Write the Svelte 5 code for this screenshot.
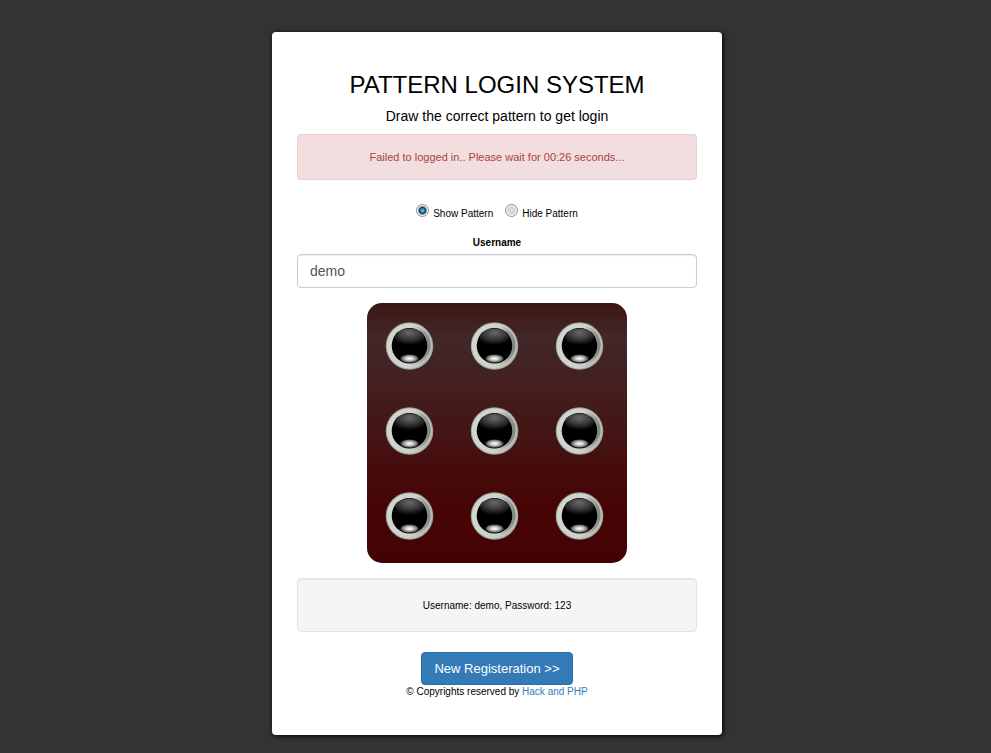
<script>
	let username = 'demo';
	let mode = 'show';
	let wait = '00:26';

	const modes = [
		{ id: 'show', label: 'Show Pattern' },
		{ id: 'hide', label: 'Hide Pattern' }
	];
	const dots = [1, 2, 3, 4, 5, 6, 7, 8, 9];
</script>

<svelte:head>
	<title>Pattern Login System</title>
</svelte:head>

<!-- shared gradients for the pattern dots -->
<svg class="defs" width="0" height="0" aria-hidden="true">
	<defs>
		<linearGradient id="ring" x1="0" y1="0" x2="1" y2="0.3">
			<stop offset="0" stop-color="#d3d6ce" />
			<stop offset="0.7" stop-color="#cfd2ca" />
			<stop offset="1" stop-color="#b9bcb5" />
		</linearGradient>
		<linearGradient id="shade" x1="0" y1="0" x2="1" y2="0">
			<stop offset="0.6" stop-color="#7f827d" stop-opacity="0" />
			<stop offset="1" stop-color="#7f827d" />
		</linearGradient>
		<radialGradient id="gloss" cx="0.5" cy="0.25" r="0.72">
			<stop offset="0" stop-color="#686868" />
			<stop offset="0.5" stop-color="#3c3c3c" />
			<stop offset="1" stop-color="#000" />
		</radialGradient>
		<radialGradient id="glow">
			<stop offset="0" stop-color="#fff" />
			<stop offset="0.35" stop-color="#d0d0d0" />
			<stop offset="0.75" stop-color="#666" />
			<stop offset="1" stop-color="#000" stop-opacity="0" />
		</radialGradient>
	</defs>
</svg>

<main class="card">
	<h1>PATTERN LOGIN SYSTEM</h1>
	<h2>Draw the correct pattern to get login</h2>

	<div class="alert" role="alert">Failed to logged in.. Please wait for {wait} seconds...</div>

	<form on:submit|preventDefault>
		<div class="modes">
			{#each modes as item}
				<label>
					<input type="radio" name="mode" value={item.id} bind:group={mode} />
					<span>{item.label}</span>
				</label>
			{/each}
		</div>

		<label class="name" for="username">Username</label>
		<input id="username" class="field" type="text" bind:value={username} />

		<div class="board">
			{#each dots as dot}
				<svg class="dot" viewBox="0 0 50 50" role="img" aria-label="Dot {dot}">
					<circle cx="24.5" cy="25" r="24.4" fill="#222" opacity="0.35" />
					<circle cx="24.5" cy="25" r="23.8" fill="#9a9e97" />
					<circle cx="24.5" cy="25" r="22.8" fill="url(#ring)" />
					<circle cx="25.5" cy="24" r="20" fill="url(#shade)" />
					<circle cx="24.5" cy="24.7" r="17.8" fill="#000" />
					<ellipse cx="24.5" cy="16" rx="14.6" ry="8.6" fill="url(#gloss)" />
					<ellipse cx="24.5" cy="37.6" rx="10.4" ry="4.8" fill="url(#glow)" />
				</svg>
			{/each}
		</div>
	</form>

	<div class="well">Username: demo, Password: 123</div>

	<button class="btn" type="button">New Registeration &gt;&gt;</button>
	<footer>© Copyrights reserved by <a href="#home">Hack and PHP</a></footer>
</main>

<style>
	:global(body) {
		padding-left: 3px;
		background: #333;
		color: #000;
		font: 10px/14px "Liberation Sans", Arial, sans-serif;
	}

	.defs {
		position: absolute;
	}

	.card {
		box-sizing: border-box;
		max-width: 450px;
		margin: 32px auto 18px;
		padding: 40px 25px 36px;
		border-radius: 4px;
		background: #fff;
		box-shadow: 1px 1px 5px #000;
		text-align: center;
	}

	h1 {
		margin: 0 0 10px;
		font-size: 24px;
		line-height: 26px;
		font-weight: 400;
	}

	h2 {
		margin: 0 0 10px;
		font-size: 14px;
		line-height: 16px;
		font-weight: 400;
	}

	.alert {
		margin-bottom: 24px;
		padding: 15px;
		border: 1px solid #ebccd1;
		border-radius: 4px;
		background: #f2dede;
		color: #a94442;
		font-size: 11px;
	}

	.modes {
		display: flex;
		justify-content: center;
		gap: 12px;
		margin-bottom: 15px;
	}

	.modes label {
		display: flex;
		gap: 4px;
	}

	.modes span {
		padding-top: 3px;
	}

	.modes input {
		appearance: none;
		box-sizing: border-box;
		width: 13px;
		height: 13px;
		margin: 0;
		border: 1px solid #8e8f8f;
		border-radius: 50%;
		background: radial-gradient(circle, #e6e6e6 0, #d0d0d0 3px, #f4f4f4 5px);
	}

	.modes input:checked {
		background: radial-gradient(circle, #7fd0f0 0, #2384b4 2px, #12375a 3px, #f4f4f4 5px);
	}

	.name {
		display: block;
		margin-bottom: 4px;
		font-weight: 700;
	}

	.field {
		box-sizing: border-box;
		display: block;
		width: 100%;
		height: 34px;
		padding: 6px 12px;
		border: 1px solid #ccc;
		border-radius: 4px;
		box-shadow: inset 0 1px 1px rgba(0, 0, 0, 0.08);
		color: #555;
		font: 14px/20px "Liberation Sans", Arial, sans-serif;
	}

	.board {
		box-sizing: border-box;
		display: grid;
		grid-template-columns: repeat(3, 50px);
		grid-template-rows: repeat(3, 50px);
		gap: 35px;
		width: 260px;
		height: 260px;
		margin: 15px auto;
		padding: 18px;
		border-radius: 15px;
		background: linear-gradient(#3b1512 0, #432729 13%, #431f1e 32%, #470405 78%, #430304 100%);
	}

	.dot {
		display: block;
		width: 50px;
		height: 50px;
	}

	.well {
		margin-bottom: 20px;
		padding: 20px 19px 18px;
		border: 1px solid #e3e3e3;
		border-radius: 4px;
		background: #f5f5f5;
		box-shadow: inset 0 1px 1px rgba(0, 0, 0, 0.05);
	}

	.btn {
		display: block;
		margin: 0 auto;
		padding: 6px 12px;
		border: 1px solid #2e6da4;
		border-radius: 4px;
		background: #337ab7;
		color: #fff;
		font: 13px/19px "Liberation Sans", Arial, sans-serif;
	}

	a {
		color: #337ab7;
		text-decoration: none;
	}
</style>
